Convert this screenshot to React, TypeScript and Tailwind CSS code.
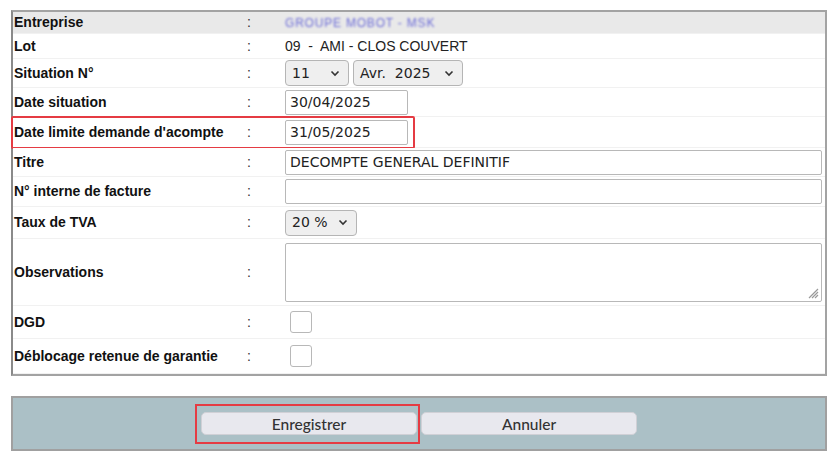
import React from "react";

const label = "font-['Liberation_Sans',Arial,sans-serif] font-bold text-[14px] text-[#111]";
const inputFont = "font-['DejaVu_Sans',Verdana,sans-serif] text-[14px] text-[#222]";

function Chevron() {
  return (
    <svg width="10" height="7" viewBox="0 0 10 7" className="shrink-0">
      <path d="M1.5 1.5 L5 5 L8.5 1.5" fill="none" stroke="#333" strokeWidth="1.6" />
    </svg>
  );
}

function Row({
  name,
  h,
  bg = "bg-white",
  children,
  extra,
}: {
  name: string;
  h: string;
  bg?: string;
  children?: React.ReactNode;
  extra?: React.ReactNode;
}) {
  return (
    <div className={`relative flex items-center ${h} ${bg} border-b border-[#f1f1f1]`}>
      <div className={`w-[234px] pl-[1px] ${label}`}>{name}</div>
      <div className={`w-[38px] ${label} font-normal text-[#333]`}>:</div>
      <div className="flex-1 flex items-center pr-[3px]">{children}</div>
      {extra}
    </div>
  );
}

export default function App() {
  return (
    <div className="w-[832px] h-[457px] bg-white pt-[10px] pl-[11px]">
      <div className="w-[816px] border-2 border-[#a3a3a3] border-l-[#8a8a8a]">
        <Row name="Entreprise" h="h-[22px]" bg="bg-[#e9e9e9]">
          <span className="font-['Liberation_Sans',Arial,sans-serif] text-[12px] text-[#6b6bd6] blur-[1.3px] tracking-[0.8px]">
            GROUPE MOBOT - MSK
          </span>
        </Row>
        <Row name="Lot" h="h-[25px]">
          <span className="font-['Liberation_Sans',Arial,sans-serif] text-[14px] text-[#222] whitespace-pre">
            09  -  AMI - CLOS COUVERT
          </span>
        </Row>
        <Row name="Situation N°" h="h-[29px]">
          <div className="flex gap-[4px]">
            <div className={`w-[64px] h-[26px] rounded-[4px] border border-[#b5b5b5] bg-[#efefef] flex items-center justify-between pl-[6px] pr-[8px] ${inputFont}`}>
              <span>11</span>
              <Chevron />
            </div>
            <div className={`w-[110px] h-[26px] rounded-[4px] border border-[#b5b5b5] bg-[#efefef] flex items-center justify-between pl-[6px] pr-[8px] ${inputFont}`}>
              <span className="whitespace-pre">Avr.  2025</span>
              <Chevron />
            </div>
          </div>
        </Row>
        <Row name="Date situation" h="h-[29px]">
          <div className={`w-[123px] h-[25px] border border-[#b8b8b8] rounded-[2px] bg-white flex items-center pl-[4px] ${inputFont}`}>
            30/04/2025
          </div>
        </Row>
        <Row
          name="Date limite demande d'acompte"
          h="h-[31px]"
          extra={
            <div className="absolute left-[-2px] top-[-1px] w-[404px] h-[33px] border-2 border-[#e53b43] rounded-[2px] pointer-events-none" />
          }
        >
          <div className={`w-[123px] h-[25px] border border-[#b8b8b8] rounded-[2px] bg-white flex items-center pl-[4px] ${inputFont}`}>
            31/05/2025
          </div>
        </Row>
        <Row name="Titre" h="h-[29px]">
          <div className={`w-full h-[25px] border border-[#b8b8b8] rounded-[2px] bg-white flex items-center pl-[4px] ${inputFont}`}>
            DECOMPTE GENERAL DEFINITIF
          </div>
        </Row>
        <Row name="N° interne de facture" h="h-[30px]">
          <div className="w-full h-[25px] border border-[#b8b8b8] rounded-[2px] bg-white" />
        </Row>
        <Row name="Taux de TVA" h="h-[32px]">
          <div className={`w-[72px] h-[26px] rounded-[4px] border border-[#b5b5b5] bg-[#efefef] flex items-center justify-between pl-[6px] pr-[8px] ${inputFont}`}>
            <span>20 %</span>
            <Chevron />
          </div>
        </Row>
        <Row name="Observations" h="h-[67px]">
          <div className="relative w-full h-[59px] border border-[#b8b8b8] rounded-[2px] bg-white">
            <svg width="12" height="12" viewBox="0 0 12 12" className="absolute right-[2px] bottom-[2px]">
              <path d="M11 2 L2 11 M11 5 L5 11 M11 8 L8 11" stroke="#999" strokeWidth="1.2" />
            </svg>
          </div>
        </Row>
        <Row name="DGD" h="h-[33px]">
          <div className="ml-[5px] w-[22px] h-[22px] border border-[#b8b8b8] rounded-[3px] bg-white" />
        </Row>
        <Row name="Déblocage retenue de garantie" h="h-[35px]">
          <div className="ml-[5px] w-[22px] h-[22px] border border-[#b8b8b8] rounded-[3px] bg-white" />
        </Row>
      </div>

      <div className="mt-[20px] w-[816px] h-[55px] border-2 border-[#a0a0a0] bg-[#abc0c6] flex items-center pl-[182px]">
        <div className="border-2 border-[#e53b43] pl-[4px] pr-[1px] py-[6px]">
          <button className="w-[216px] h-[23px] rounded-[5px] bg-[#e8e8ee] border border-[#d0d0d6] font-['Lato',sans-serif] font-medium text-[15.5px] text-[#333]">
            Enregistrer
          </button>
        </div>
        <button className="ml-[1px] w-[216px] h-[23px] rounded-[5px] bg-[#e8e8ee] border border-[#d0d0d6] font-['Lato',sans-serif] font-medium text-[15.5px] text-[#333]">
          Annuler
        </button>
      </div>
    </div>
  );
}
